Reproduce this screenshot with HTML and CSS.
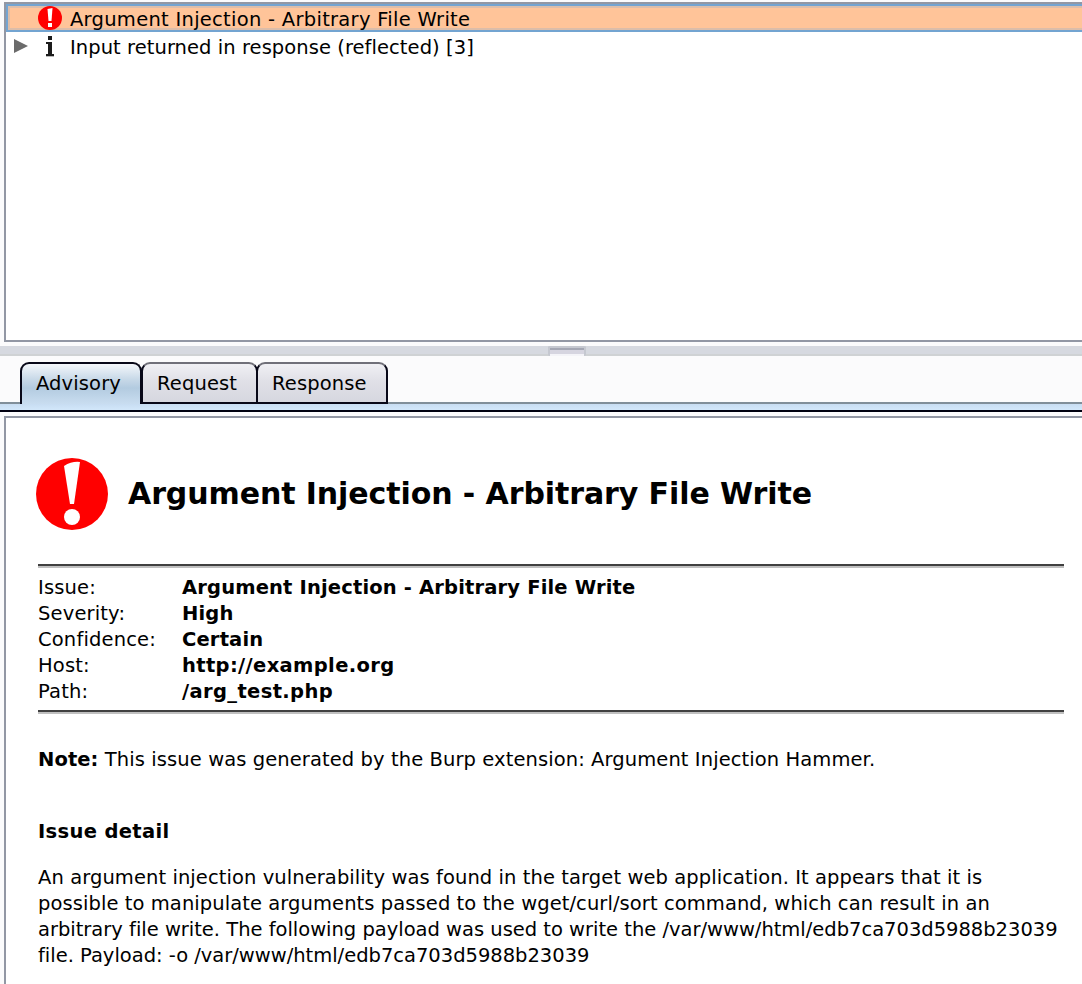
FILE: index.html
```
<!DOCTYPE html>
<html lang="en">
<head>
<meta charset="utf-8">
<title>Issue advisory</title>
<link rel="stylesheet" href="styles.css">
</head>
<body>
<main class="app">
  <section class="issue-tree">
    <div class="tree-row selected">
      <span class="arrow"></span>
      <svg class="icon" viewBox="0 0 24 24"><circle cx="12" cy="12" r="12" fill="#f00"/><path d="M9.5 3L14.5 2L13.5 15H10.5Z" fill="#fff"/><path d="M10 17h4v4h-4z" fill="#fff"/></svg>
      <span class="label l1">Argument Injection - Arbitrary File Write</span>
    </div>
    <div class="tree-row">
      <svg class="arrow" viewBox="0 0 14 14"><path d="M0 0L14 7L0 14Z" fill="#6b6b6b"/></svg>
      <svg class="icon" viewBox="0 0 24 24"><path d="M10 2h4v4h-4zM8 8h6v12h2v2H8v-2h2V10H8z" fill="#1c1c1c"/><path d="M8 22h8v1H8z" fill="#bbb"/></svg>
      <span class="label l2">Input returned in response (reflected) [3]</span>
    </div>
  </section>
  <div class="divider"><span class="grip"></span></div>
  <nav class="tabs">
    <span class="tab active">Advisory</span><span class="tab request">Request</span><span class="tab response">Response</span>
  </nav>
  <div class="strip"></div>
  <article class="advisory">
    <header class="heading">
      <svg class="severity" viewBox="0 0 72 72"><circle cx="36" cy="36" r="36" fill="#f00"/><path d="M28 8Q36 3 44 4L38 46H34Z" fill="#fff"/><circle cx="36" cy="59" r="8" fill="#fff"/></svg>
      <h1>Argument Injection - Arbitrary File Write</h1>
    </header>
    <dl class="facts">
      <dt>Issue:</dt><dd>Argument Injection - Arbitrary File Write</dd>
      <dt>Severity:</dt><dd>High</dd>
      <dt>Confidence:</dt><dd>Certain</dd>
      <dt>Host:</dt><dd class="wide">http://example.org</dd>
      <dt>Path:</dt><dd class="wide">/arg_test.php</dd>
    </dl>
    <p class="note"><b>Note:</b> This issue was generated by the Burp extension: Argument Injection Hammer.</p>
    <h2>Issue detail</h2>
    <p class="detail">An argument injection vulnerability was found in the target web application. It appears that it is<br>possible to manipulate arguments passed to the wget/curl/sort command, which can result in an<br><span class="tight">arbitrary file write. The following payload was used to write the /var/www/html/edb7ca703d5988b23039<br>file. Payload: -o /var/www/html/edb7ca703d5988b23039</span></p>
  </article>
</main>
</body>
</html>
```
FILE: styles.css
```
* { box-sizing: border-box; }
body { margin: 0; background: #fbfbfc; color: #000; font-family: "DejaVu Sans", sans-serif; font-size: 19.5px; }
.app { width: 1082px; height: 984px; overflow: hidden; padding-top: 2px; display: flex; flex-direction: column; }
.issue-tree { height: 340px; flex: none; margin-left: 4px; border: 2px solid #9297a4; border-right: 0; background: #fff; }
.tree-row { height: 28px; display: flex; align-items: center; padding-left: 8px; white-space: nowrap; line-height: 20px; }
.selected { background: #ffc499; border: 2px solid #73a4d1; border-right: 0; padding-left: 6px; box-shadow: inset 2px 2px #dcbda9, inset 0 -2px #dcbda9; }
.arrow { width: 14px; height: 14px; flex: none; }
.icon { width: 24px; height: 24px; margin: 0 8px 0 10px; flex: none; }
.label { padding-top: 4px; }
.l1 { letter-spacing: .28px; }
.l2 { letter-spacing: .06px; }
.divider { flex: none; height: 10px; margin-top: 4px; background: #d6d9e0; border-bottom: 2px solid #cfd2d4; padding-left: 548px; }
.grip { display: block; width: 38px; height: 10px; background: linear-gradient(#a4a7b4 2px, #d6d5e0 2px 6px, #f4f4f8 6px); background-origin: padding-box; background-clip: padding-box; border: solid #c5c8d0; border-width: 2px 2px 0; border-radius: 2px; }
.tabs { flex: none; height: 48px; padding: 6px 0 0 20px; display: flex; border-bottom: 2px solid #808e99; }
.tab { height: 42px; line-height: 40px; border: 2px solid #080818; border-top-color: #707079; border-radius: 9px 9px 0 0; background: linear-gradient(#f0f0f4, #e0e0e7 45%, #d6d7df); padding-left: 14px; letter-spacing: .12px; }
.active { width: 122px; border-color: #080818; border-bottom: 0; background: linear-gradient(#f4f7fb, #c8d9e8 38%, #b3cbe0 60%, #c9ddf0); }
.request { width: 117px; margin-left: -1px; }
.response { width: 132px; margin-left: -2px; }
.strip { flex: none; height: 8px; background: linear-gradient(#c8ddf2, #d2e7fa); border-bottom: 2px solid #000010; }
.advisory { flex: 1; margin: 4px 0 0 4px; border: 2px solid #9297a4; border-right: 0; border-bottom: 0; background: #fff; padding: 40px 18px 0 32px; line-height: 26px; }
.heading { display: flex; align-items: center; height: 72px; margin-left: -2px; }
.severity { width: 72px; height: 72px; margin-right: 20px; }
h1 { margin: 0; font-size: 30px; white-space: nowrap; letter-spacing: -.09px; }
.facts { display: grid; grid-template-columns: 144px 1fr; grid-auto-rows: 26px; align-content: start; margin: 34px 0 0; padding: 9px 0 5px; border-top: 2px solid #404040; border-bottom: 2px solid #c0c0c0; box-shadow: inset 0 2px #c0c0c0, inset 0 -2px #404040; height: 150px; letter-spacing: .16px; }
dd { margin: 0; font-weight: bold; }
.wide { letter-spacing: .36px; }
.note { margin: 33px 0 0; white-space: nowrap; letter-spacing: .09px; }
h2 { font-size: 19.5px; margin: 46px 0 0; letter-spacing: .35px; }
.detail { margin: 20px 0 0; white-space: nowrap; letter-spacing: .08px; }
.tight { letter-spacing: -.01px; }
```
